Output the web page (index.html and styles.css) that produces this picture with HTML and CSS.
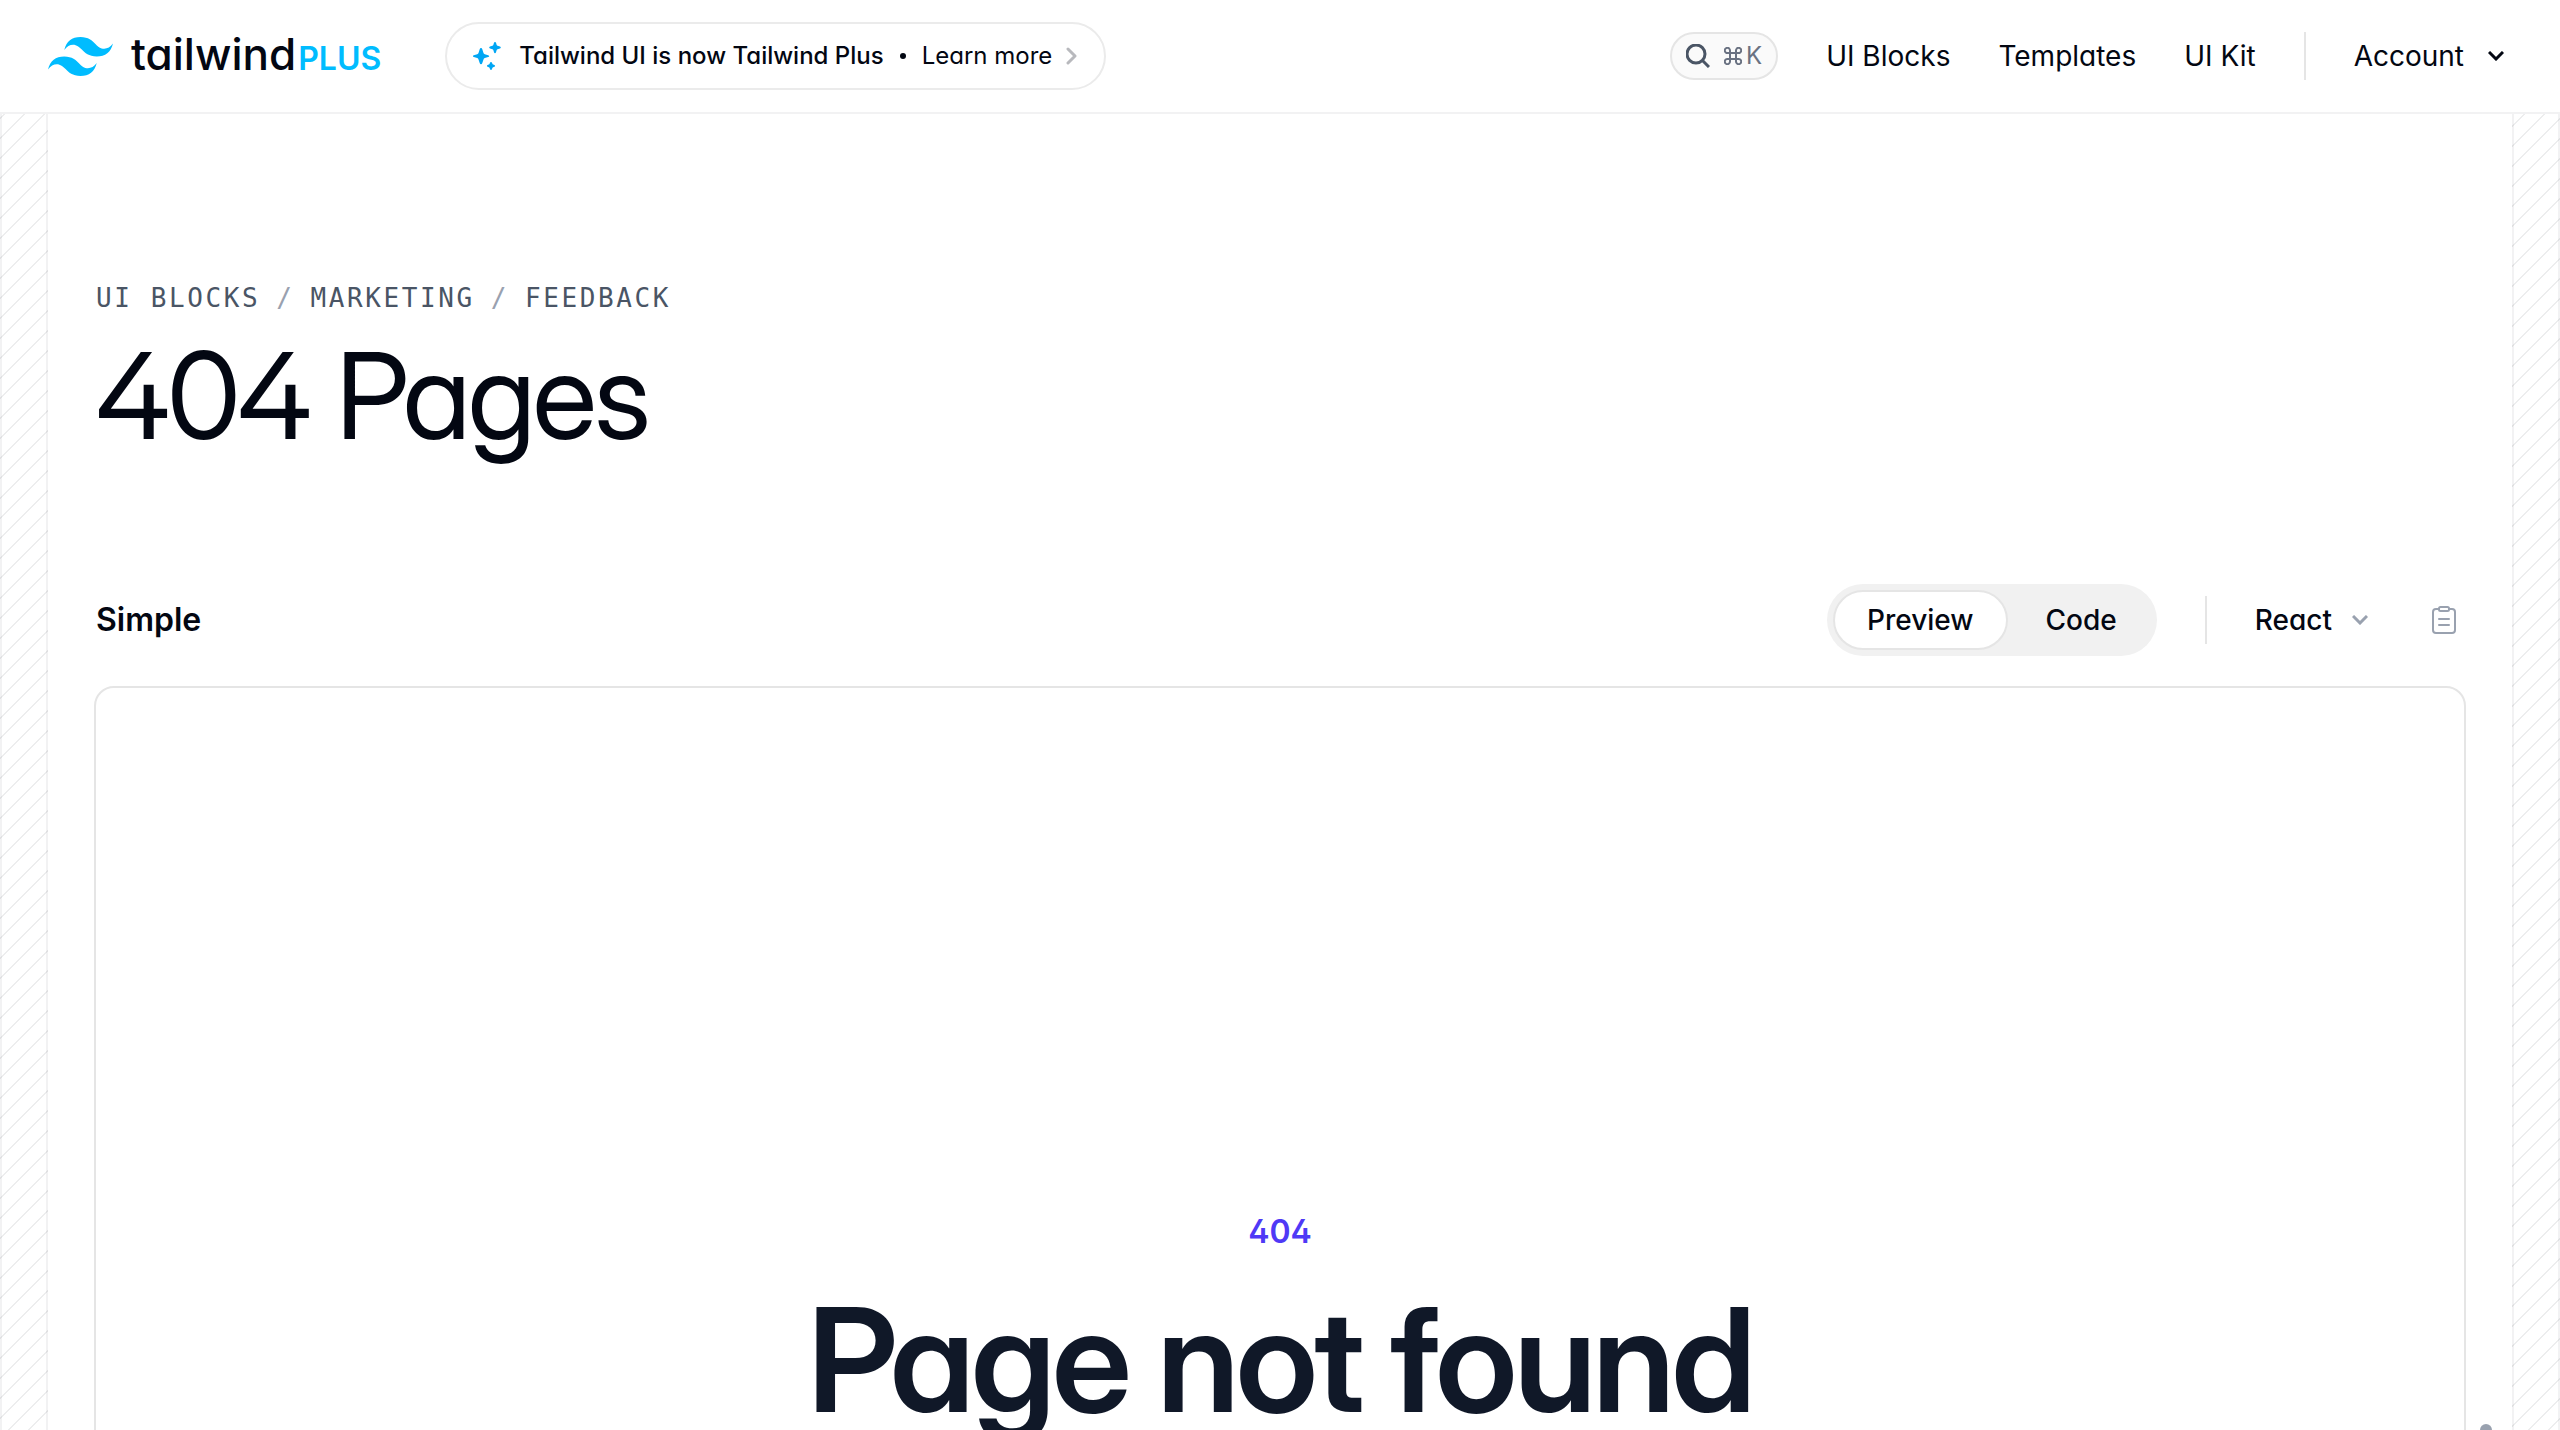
FILE: index.html
```html
<!DOCTYPE html>
<html lang="en">
<head>
<meta charset="utf-8">
<meta name="viewport" content="width=device-width, initial-scale=1">
<title>404 Pages - Tailwind Plus</title>
<link rel="stylesheet" href="styles.css">
</head>
<body>
<header class="topbar">
  <a class="logo" href="#">
    <svg class="logo-mark" viewBox="0 0 54 32.4" aria-hidden="true"><path fill="currentColor" d="M27 0c-7.2 0-11.7 3.6-13.5 10.8 2.7-3.6 5.85-4.95 9.45-4.05 2.054.513 3.522 2.004 5.147 3.653C30.744 13.09 33.808 16.2 40.5 16.2c7.2 0 11.7-3.6 13.5-10.8-2.7 3.6-5.85 4.95-9.45 4.05-2.054-.513-3.522-2.004-5.147-3.653C36.756 3.11 33.692 0 27 0zM13.5 16.2C6.3 16.2 1.8 19.8 0 27c2.7-3.6 5.85-4.95 9.45-4.05 2.054.514 3.522 2.004 5.147 3.653C17.244 29.29 20.308 32.4 27 32.4c7.2 0 11.7-3.6 13.5-10.8-2.7 3.6-5.85 4.95-9.45 4.05-2.054-.513-3.522-2.004-5.147-3.653C23.256 19.31 20.192 16.2 13.5 16.2z"/></svg>
    <span class="wordmark"><span class="word">tailwind</span><span class="plus">PLUS</span></span>
  </a>
  <a class="announcement" href="#">
    <svg class="sparkles" viewBox="0 0 28 28" aria-hidden="true"><path fill="currentColor" d="M8 6q1 0 1.300 1.200l1.200 3.800q.3 1 1.300 1.300l3.400 1q1 .3 1 .9t-1 .9l-3.400 1q-1 .3-1.300 1.300l-1.200 3.600q-.3 1.200-1.300 1.200t-1.300-1.200L5.500 17.400q-.3-1-1.300-1.300l-3.400-1q-.9-.3-.9-.9t.9-.9l3.400-1q1-.3 1.300-1.300l1.200-3.800Q7 6 8 6zM22 0q.8 0 1 .8l.7 2.100q.2.700.9.900l2.400.8q.8.300.8.900t-.8.900l-2.400.8q-.7.200-.9.900L23 10.300q-.2.900-1 .9t-1-.9l-.7-2.200q-.2-.7-.9-.9L17 6.400q-.8-.3-.8-.9t.8-.9l2.400-.8q.7-.2.900-.9L21 .8q.2-.8 1-.8zM18 20q.7 0 .9.600l.5 1.200q.2.600.8.800l1.200.5q.6.200.6.800t-.6.800l-1.200.5q-.6.200-.8.800l-.5 1.300q-.2.700-.9.700t-.9-.7l-.5-1.300q-.2-.6-.8-.8l-1.200-.5q-.6-.2-.6-.8t.6-.8l1.200-.5q.6-.2.800-.8l.5-1.200q.2-.6.900-.6z"/></svg>
    <strong class="announcement-title">Tailwind UI is now Tailwind Plus</strong>
    <svg class="bullet" viewBox="0 0 6 6" aria-hidden="true"><circle cx="3" cy="3" r="3" fill="currentColor"/></svg>
    <span>Learn more</span>
    <svg class="chevron-right" viewBox="0 0 12 18" aria-hidden="true"><path d="M2 2l7 7-7 7" fill="none" stroke="currentColor" stroke-width="3" stroke-linecap="round" stroke-linejoin="round"/></svg>
  </a>
  <nav class="nav">
    <button class="search" type="button" aria-label="Search">
      <svg class="search-icon" viewBox="0 0 24 24" aria-hidden="true"><path d="M16.500 16.500L23 23M19 10a9 9 0 1 1-18 0a9 9 0 0 1 18 0z" fill="none" stroke="currentColor" stroke-width="3"/></svg>
      <span class="shortcut"><svg class="cmd" viewBox="0 0 18 18" aria-hidden="true"><path d="M6 6h6v6H6zM6 6H3.700A2.600 2.600 0 1 1 6 3.500zM12 6V3.500A2.600 2.600 0 1 1 14.300 6zM12 12h2.300A2.600 2.600 0 1 1 12 14.500zM6 12v2.500A2.600 2.600 0 1 1 3.700 12z" fill="none" stroke="currentColor" stroke-width="2" stroke-linejoin="round"/></svg>K</span>
    </button>
    <a href="#">UI Blocks</a>
    <a href="#">Templates</a>
    <a href="#">UI Kit</a>
    <span class="divider"></span>
    <button class="menu-button account" type="button">Account
      <svg class="chevron-down" viewBox="0 0 16 10" aria-hidden="true"><path d="M1 1l7 7 7-7" fill="none" stroke="currentColor" stroke-width="3"/></svg>
    </button>
  </nav>
</header>
<div class="shell">
  <div class="gutter"></div>
  <main class="content">
    <nav class="breadcrumbs" aria-label="Breadcrumb">
      <a href="#">UI BLOCKS</a><span class="slash">/</span><a href="#">MARKETING</a><span class="slash">/</span><a href="#">FEEDBACK</a>
    </nav>
    <h1 class="page-title">404 Pages</h1>
    <section class="example">
      <div class="toolbar">
        <h2 class="example-name">Simple</h2>
        <div class="tabs" role="tablist">
          <button class="tab selected" type="button" role="tab" aria-selected="true">Preview</button>
          <button class="tab" type="button" role="tab" aria-selected="false">Code</button>
        </div>
        <span class="divider"></span>
        <button class="menu-button framework" type="button">React
          <svg class="chevron-down muted" viewBox="0 0 16 10" aria-hidden="true"><path d="M1 1l7 7 7-7" fill="none" stroke="currentColor" stroke-width="3"/></svg>
        </button>
        <button class="copy" type="button" aria-label="Copy code">
          <svg class="clipboard" viewBox="0 0 24 28" aria-hidden="true"><g fill="none" stroke="currentColor" stroke-width="2" stroke-linejoin="round"><path d="M7 3H4a3 3 0 0 0-3 3v18a3 3 0 0 0 3 3h16a3 3 0 0 0 3-3V6a3 3 0 0 0-3-3h-3"/><rect x="7" y="1" width="10" height="4" rx="1.500"/><path d="M7 13h10M7 19h10" stroke-linecap="round"/></g></svg>
        </button>
      </div>
      <div class="preview">
        <p class="error-code">404</p>
        <h2 class="error-title">Page not found</h2>
        <div class="resize-handle"><i></i><i></i><i></i></div>
      </div>
    </section>
  </main>
  <div class="gutter"></div>
</div>
</body>
</html>
```
FILE: styles.css
```css
:root {
  --ink: #030712;
  --muted: #99a1af;
  --line: #e5e5e5;
  --faint: rgba(3, 7, 18, 0.05);
  --hatch: rgba(3, 7, 18, 0.07);
}

* {
  box-sizing: border-box;
}

html {
  scrollbar-width: none;
}

body {
  margin: 0;
  background: #fff;
  color: var(--ink);
  font: 400 28px/48px Inter, "Liberation Sans", sans-serif;
  font-feature-settings: "cv02", "cv03", "cv04", "cv11";
}

h1,
h2,
p {
  margin: 0;
}

a {
  color: inherit;
  text-decoration: none;
}

button {
  margin: 0;
  padding: 0;
  border: 0;
  background: none;
  color: inherit;
  font: inherit;
  font-feature-settings: inherit;
  cursor: pointer;
}

svg {
  display: block;
  flex: none;
}

/* Top bar */
.topbar {
  position: sticky;
  top: 0;
  z-index: 10;
  display: flex;
  align-items: center;
  height: 114px;
  padding: 0 56px 0 48px;
  border-bottom: 2px solid #f2f2f3;
  background: #fff;
}

.logo {
  display: flex;
  align-items: center;
  gap: 18px;
  color: #00bcff;
}

.logo-mark {
  width: 65px;
  height: 39px;
}

.wordmark {
  display: flex;
  align-items: baseline;
  gap: 2px;
}

.word {
  color: var(--ink);
  font-size: 44px;
  font-weight: 500;
}

.plus {
  font-size: 32px;
  font-weight: 600;
}

.announcement {
  display: flex;
  align-items: center;
  height: 68px;
  margin-left: 64px;
  padding: 0 26px;
  border: 2px solid #ebebeb;
  border-radius: 34px;
  font-size: 24px;
}

.announcement-title {
  margin-left: 18px;
  font-weight: 500;
}

.sparkles {
  width: 28px;
  height: 28px;
  color: #00a6f4;
}

.bullet {
  width: 6px;
  height: 6px;
  margin: 0 16px;
}

.chevron-right {
  width: 12px;
  height: 18px;
  margin-left: 14px;
  color: #b8b9bd;
}

.nav {
  display: flex;
  align-items: center;
  gap: 48px;
  margin-left: auto;
}

.search {
  display: flex;
  align-items: center;
  gap: 14px;
  height: 48px;
  padding: 0 14px;
  border: 2px solid var(--line);
  border-radius: 24px;
  background: #fafafa;
  color: #4a5565;
}

.search-icon {
  width: 24px;
  height: 24px;
}

.shortcut {
  display: flex;
  align-items: center;
  gap: 4px;
  color: #6a7282;
  font-size: 24px;
}

.cmd {
  width: 18px;
  height: 18px;
}

.divider {
  width: 2px;
  height: 48px;
  background: var(--line);
}

.menu-button {
  display: flex;
  align-items: center;
}

.account {
  gap: 24px;
}

.chevron-down {
  width: 16px;
  height: 10px;
}

.muted {
  color: var(--muted);
}

/* Page frame */
.shell {
  display: grid;
  grid-template-columns: 48px minmax(0, 1fr) 48px;
}

.gutter {
  border: solid var(--faint);
  border-width: 0 2px;
  background-image: repeating-linear-gradient(315deg, var(--hatch) 0, var(--hatch) 2px, transparent 0, transparent 50%);
  background-size: 20px 20px;
  background-attachment: fixed;
}

.content {
  padding: 168px 46px 96px;
}

.breadcrumbs {
  display: flex;
  padding-left: 2px;
  color: #4a5565;
  font: 400 26px/32px "DejaVu Sans Mono", monospace;
  letter-spacing: 0.1em;
}

.slash {
  margin: 0 16px;
  color: var(--muted);
}

.page-title {
  margin-top: 22px;
  padding-left: 2px;
  font-family: "Inter Display", Inter, sans-serif;
  font-size: 120px;
  font-weight: 400;
  font-variation-settings: "opsz" 32;
  line-height: 120px;
  letter-spacing: -0.025em;
}

.example {
  margin-top: 128px;
}

.toolbar {
  display: flex;
  align-items: center;
  padding: 0 10px 0 2px;
}

.example-name {
  margin-right: auto;
  font-size: 32px;
  font-weight: 600;
}

.tabs {
  display: flex;
  gap: 4px;
  margin-right: 48px;
  padding: 6px;
  border-radius: 36px;
  background: #f1f1f1;
}

.tab {
  height: 60px;
  padding: 0 32px;
  border: 2px solid transparent;
  border-radius: 30px;
  font-weight: 500;
}

.selected {
  border-color: var(--line);
  background: #fff;
}

.framework {
  gap: 20px;
  margin-left: 48px;
  font-weight: 500;
}

.copy {
  margin-left: 64px;
  color: var(--muted);
}

.clipboard {
  width: 24px;
  height: 28px;
}

/* Preview */
.preview {
  position: relative;
  min-height: 1520px;
  margin-top: 30px;
  padding-top: 520px;
  border: 2px solid var(--line);
  border-radius: 20px;
  text-align: center;
}

.error-code {
  color: #4f39f6;
  font-size: 32px;
  font-weight: 600;
}

.error-title {
  margin-top: 32px;
  color: #101828;
  font-family: "Inter Display", Inter, sans-serif;
  font-size: 144px;
  font-weight: 600;
  font-variation-settings: "opsz" 32;
  line-height: 144px;
  letter-spacing: -0.025em;
}

.resize-handle {
  position: absolute;
  top: 0;
  bottom: 0;
  right: -28px;
  display: flex;
  flex-direction: column;
  justify-content: center;
  gap: 4px;
}

.resize-handle i {
  width: 12px;
  height: 12px;
  border-radius: 50%;
  background: var(--muted);
}
```
